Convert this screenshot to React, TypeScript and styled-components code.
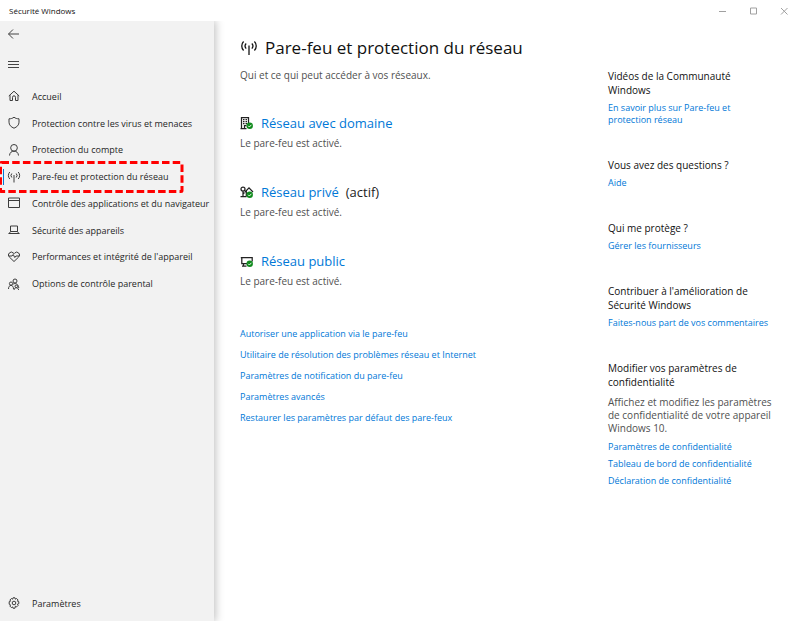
import React from "react";
import styled, { createGlobalStyle } from "styled-components";

const GlobalStyle = createGlobalStyle`
  * { box-sizing: border-box; }
  html, body, #root { height: 100%; }
  body {
    margin: 0;
    background: #fff;
    color: #1f1f1f;
    font-family: "Open Sans", "Noto Sans", sans-serif;
    font-size: 9px;
  }
  h1, h2, h3, p, ul { margin: 0; padding: 0; font-weight: 400; }
  ul { list-style: none; }
  button { font: inherit; color: inherit; background: none; border: 0; padding: 0; cursor: pointer; }
`;

const Window = styled.div`
  min-height: 100%;
  display: flex;
  flex-direction: column;
`;

const TitleBar = styled.header`
  height: 21px;
  display: flex;
  align-items: center;
  justify-content: space-between;
  padding: 0 8px 0 9px;
  font-size: 8px;
  color: #111;
`;

const WindowControls = styled.div`
  display: flex;
  gap: 15px;
`;

const ControlButton = styled.button`
  display: flex;
  align-items: center;
  justify-content: center;
  width: 16px;
  height: 16px;
  color: #a0a0a0;
`;

const Body = styled.div`
  flex: 1;
  display: flex;
`;

const Sidebar = styled.nav`
  flex: 0 0 214px;
  display: flex;
  flex-direction: column;
  background: #f2f2f2;
  box-shadow: 0 0 9px 1px rgba(0, 0, 0, 0.28);
  clip-path: inset(0 -14px 0 0);
  padding-bottom: 5px;
`;

const IconButton = styled.button`
  width: 28px;
  height: 26px;
  padding-left: 7px;
  display: flex;
  align-items: center;
  color: #444;

  & + & { margin: 4px 0 6px; }
`;

const NavList = styled.ul`
  display: grid;
  grid-auto-rows: 1fr;
  min-height: 214px;
`;

const NavEntry = styled.li`
  position: relative;
  display: grid;
`;

const NavLink = styled.a<{ $active?: boolean }>`
  display: flex;
  align-items: center;
  gap: 11px;
  min-height: 26px;
  padding-left: 7px;
  color: #1f1f1f;
  text-decoration: none;
  white-space: nowrap;

  &::before {
    content: "";
    position: absolute;
    left: 3px;
    width: 1px;
    height: 16px;
    background: ${(p) => (p.$active ? "#0078d7" : "transparent")};
  }

  svg { color: #3c3c3c; }
`;

const Highlight = styled.svg`
  position: absolute;
  top: -2px;
  left: 0;
  width: 184px;
  height: 32px;
  pointer-events: none;
`;

const Spacer = styled.div`
  flex: 1;
`;

const Content = styled.main`
  flex: 1;
  display: flex;
  justify-content: space-between;
  padding: 14px 24px 20px 26px;
`;

const Primary = styled.section`
  min-width: 0;
`;

const PageTitle = styled.h1`
  display: flex;
  align-items: center;
  gap: 7px;
  font-size: 17px;
  line-height: 26px;
  color: #111;
`;

const Text = styled.p`
  font-size: 10px;
  line-height: 14px;
  color: #505050;
`;

const Subtitle = styled(Text)`
  margin-top: 7px;
`;

const Networks = styled.div`
  display: flex;
  flex-direction: column;
  gap: 33px;
  margin: 32px 0 39px;
`;

const NetworkTitle = styled.h2`
  display: flex;
  align-items: center;
  gap: 7px;
  font-size: 13px;
  line-height: 18px;
  margin-bottom: 4px;
  color: #222;
`;

const Link = styled.a`
  color: #0078d7;
  text-decoration: none;
`;

const ActionList = styled.ul`
  display: flex;
  flex-direction: column;
  gap: 7px;
  line-height: 14px;
`;

const Aside = styled.aside`
  flex: 0 0 168px;
  display: flex;
  flex-direction: column;
  gap: 32px;
  padding-top: 34px;
`;

const AsideTitle = styled.h3`
  max-width: 142px;
  font-size: 10px;
  line-height: 14px;
  color: #111;
  margin-bottom: 5px;
`;

const AsideText = styled(Text)`
  line-height: 13px;
  margin: 7px 0 6px;
`;

const AsideLinks = styled.ul<{ $narrow?: boolean }>`
  display: flex;
  flex-direction: column;
  gap: 5px;
  max-width: ${(p) => (p.$narrow ? "142px" : "none")};
  line-height: 12px;
`;

const Glyph = styled.svg`
  flex: none;
  fill: none;
  stroke: currentColor;
  stroke-width: 1;
`;

const paths: Record<string, React.ReactNode> = {
  back: <path d="M1.5 7H12M6 2.500L1.500 7 6 11.500" />,
  menu: <path d="M1 4.500h11M1 7.500h11M1 10.500h11" />,
  home: <path d="M1.800 7L7 2.200 12.200 7M3 6.200V11.500h2.500V8.300a1.500 1.500 0 0 1 3 0v3.200H11V6.200" />,
  shield: <path d="M7 1.200C5.500 2.400 4 2.800 2 2.800v3.400c0 2.800 2 4.800 5 6 3-1.200 5-3.200 5-6V2.800c-2 0-3.500-.4-5-1.600z" />,
  person: <path d="M2.500 12.500c.3-3 2-4.300 4.500-4.300s4.200 1.300 4.500 4.300M7 1.500a3.350 3.350 0 1 1 0 6.700 3.350 3.350 0 0 1 0-6.700z" />,
  antenna: <path d="M7 5V12.500M4.800 3.500a3 3 0 0 0 0 4M9.200 3.500a3 3 0 0 1 0 4M2.800 2a5 5 0 0 0 0 7M11.200 2a5 5 0 0 1 0 7" />,
  browser: <path d="M1.500 2h11v9.500h-11zM1.500 4.500h11" />,
  laptop: <path d="M3.500 3h7v5.500h-7zM1.500 10.500h11M3.500 8.500l-1.300 2M10.500 8.500l1.300 2" />,
  heart: <path d="M7 11.500L2.300 7a2.800 2.800 0 0 1 0-4 2.800 2.800 0 0 1 4 0L7 3.700l.7-.7a2.800 2.800 0 0 1 4 4zM2 6h3l1.200-1.500 1.600 3L9 6h3" />,
  family: <path d="M8 2a2 2 0 1 1 0 4 2 2 0 0 1 0-4zM4 5a1.600 1.600 0 1 1 0 3.200A1.600 1.600 0 0 1 4 5zM1.500 12c0-2.300 1-3.600 2.500-3.600S6.500 9.700 6.500 12M5.800 7.300C8.500 5.500 11.500 7 11.800 11M9.300 8a1.300 1.300 0 1 1 0 2.600A1.300 1.300 0 0 1 9.300 8zM7 13c.2-3 4.400-3 4.600 0" />,
  gear: (
    <>
      <circle cx="7" cy="7" r="1.800" />
      <path d="M6 1.800h2l.4 1.400 1.200-.7 1.500 1.500-.7 1.200 1.400.5v2l-1.400.5.700 1.200-1.500 1.500-1.200-.7L8 12.200H6L5.600 10.900l-1.200.7-1.500-1.500.7-1.200L2.200 8.200V5.700l1.400-.5-.7-1.200 1.500-1.500 1.200.7z" />
    </>
  ),
};

const Icon = ({ name, size = 14 }: { name: string; size?: number }) => (
  <Glyph width={size} height={size} viewBox="0 0 14 14" aria-hidden="true">
    {paths[name]}
  </Glyph>
);

const networkPaths: Record<string, React.ReactNode> = {
  domain: <path d="M1.500 12V1.500h7V8M.5 12.500h6M3 3.500h1.500M5.500 3.500H7M3 5.500h1.500M5.500 5.500H7M3 7.500h1.500M5.500 7.500H7M4.500 12V9.500h2" />,
  private: <path d="M3 11V6M3 2a2 2 0 1 1 0 4 2 2 0 0 1 0-4zM.5 11.500h6M3 9l1.500-1.500M5 7l4-4.200L13 7M6.300 6v5.500" />,
  public: <path d="M.8 3.500h11.400v4M1.800 3.500v6H8M3.500 9.500V12M2 12h4.500" />,
};

const NetworkIcon = ({ name }: { name: string }) => (
  <Glyph width="14" height="14" viewBox="0 0 14 14" aria-hidden="true">
    <g strokeWidth="1.250">{networkPaths[name]}</g>
    <circle cx="9.700" cy="9.800" r="3.200" fill="#0f8a1c" stroke="none" />
    <path d="M8.200 9.800l1.200 1.200 2-2.200" stroke="#fff" strokeWidth=".9" />
  </Glyph>
);

const navItems = [
  { icon: "home", label: "Accueil" },
  { icon: "shield", label: "Protection contre les virus et menaces" },
  { icon: "person", label: "Protection du compte" },
  { icon: "antenna", label: "Pare-feu et protection du réseau", active: true },
  { icon: "browser", label: "Contrôle des applications et du navigateur" },
  { icon: "laptop", label: "Sécurité des appareils" },
  { icon: "heart", label: "Performances et intégrité de l'appareil" },
  { icon: "family", label: "Options de contrôle parental" },
];

const networks = [
  { icon: "domain", label: "Réseau avec domaine" },
  { icon: "private", label: "Réseau privé", note: "(actif)" },
  { icon: "public", label: "Réseau public" },
];

const actions = [
  "Autoriser une application via le pare-feu",
  "Utilitaire de résolution des problèmes réseau et Internet",
  "Paramètres de notification du pare-feu",
  "Paramètres avancés",
  "Restaurer les paramètres par défaut des pare-feux",
];

const asideGroups = [
  {
    title: "Vidéos de la Communauté Windows",
    links: ["En savoir plus sur Pare-feu et protection réseau"],
    narrow: true,
  },
  { title: "Vous avez des questions ?", links: ["Aide"] },
  { title: "Qui me protège ?", links: ["Gérer les fournisseurs"] },
  { title: "Contribuer à l'amélioration de Sécurité Windows", links: ["Faites-nous part de vos commentaires"] },
  {
    title: "Modifier vos paramètres de confidentialité",
    text: "Affichez et modifiez les paramètres de confidentialité de votre appareil Windows 10.",
    links: ["Paramètres de confidentialité", "Tableau de bord de confidentialité", "Déclaration de confidentialité"],
  },
];

export default function App() {
  return (
    <>
      <GlobalStyle />
      <Window>
        <TitleBar>
          <span>Sécurité Windows</span>
          <WindowControls>
            <ControlButton aria-label="Réduire">
              <Glyph width="8" height="8" viewBox="0 0 8 8"><path d="M1 4.500h7" /></Glyph>
            </ControlButton>
            <ControlButton aria-label="Agrandir">
              <Glyph width="8" height="8" viewBox="0 0 8 8"><path d="M1.500 1h6v6h-6z" /></Glyph>
            </ControlButton>
            <ControlButton aria-label="Fermer">
              <Glyph width="8" height="8" viewBox="0 0 8 8"><path d="M1 1l6.500 6.500M7.500 1L1 7.500" /></Glyph>
            </ControlButton>
          </WindowControls>
        </TitleBar>
        <Body>
          <Sidebar>
            <IconButton aria-label="Retour"><Icon name="back" /></IconButton>
            <IconButton aria-label="Menu"><Icon name="menu" /></IconButton>
            <NavList>
              {navItems.map((item) => (
                <NavEntry key={item.label}>
                  <NavLink href="#" $active={item.active} aria-current={item.active ? "page" : undefined}>
                    <Icon name={item.icon} />
                    {item.label}
                  </NavLink>
                  {item.active && (
                    <Highlight viewBox="0 0 184 32" aria-hidden="true">
                      <rect x=".5" y="1.500" width="181.500" height="29" rx="1" fill="none" stroke="#f00" strokeWidth="3" strokeDasharray="7.500 3.200" />
                    </Highlight>
                  )}
                </NavEntry>
              ))}
            </NavList>
            <Spacer />
            <NavLink href="#">
              <Icon name="gear" />
              Paramètres
            </NavLink>
          </Sidebar>
          <Content>
            <Primary>
              <PageTitle>
                <Icon name="antenna" size={18} />
                Pare-feu et protection du réseau
              </PageTitle>
              <Subtitle>Qui et ce qui peut accéder à vos réseaux.</Subtitle>
              <Networks>
                {networks.map((network) => (
                  <section key={network.label}>
                    <NetworkTitle>
                      <NetworkIcon name={network.icon} />
                      <Link href="#">{network.label}</Link>
                      {network.note && <span>{network.note}</span>}
                    </NetworkTitle>
                    <Text>Le pare-feu est activé.</Text>
                  </section>
                ))}
              </Networks>
              <ActionList>
                {actions.map((label) => (
                  <li key={label}><Link href="#">{label}</Link></li>
                ))}
              </ActionList>
            </Primary>
            <Aside>
              {asideGroups.map((group) => (
                <section key={group.title}>
                  <AsideTitle>{group.title}</AsideTitle>
                  {group.text && <AsideText>{group.text}</AsideText>}
                  <AsideLinks $narrow={group.narrow}>
                    {group.links.map((label) => (
                      <li key={label}><Link href="#">{label}</Link></li>
                    ))}
                  </AsideLinks>
                </section>
              ))}
            </Aside>
          </Content>
        </Body>
      </Window>
    </>
  );
}
